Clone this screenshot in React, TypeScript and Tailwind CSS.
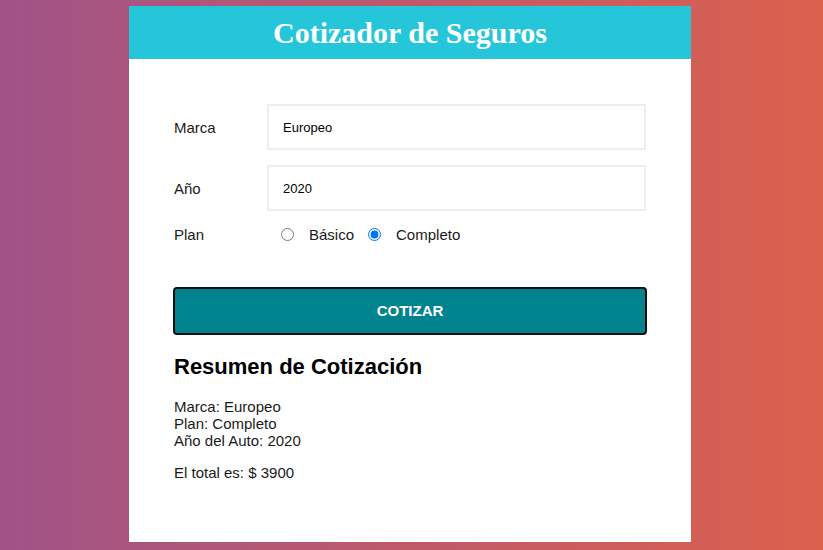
import { useState } from "react";
import type { FormEvent, ReactNode } from "react";

const brands = ["Americano", "Europeo", "Asiatico"];
const years = ["2021", "2020", "2019", "2018", "2017"];

type FieldProps = { id: string; label: string; children: ReactNode };

function Field({ id, label, children }: FieldProps) {
  return (
    <div className="mb-[15px] flex items-center">
      <label htmlFor={id} className="w-[93px] shrink-0">
        {label}
      </label>
      {children}
    </div>
  );
}

const selectClass =
  "min-w-0 flex-1 appearance-none border-2 border-[#eeeeee] bg-white px-[14px] pt-[13px] pb-[11px] text-[13px] leading-[18px] text-black";

export default function App() {
  const [brand, setBrand] = useState("Europeo");
  const [year, setYear] = useState("2020");
  const [plan, setPlan] = useState("Completo");

  const handleSubmit = (event: FormEvent) => event.preventDefault();

  return (
    <div className="min-h-screen bg-linear-to-r from-[#a05288] via-[#bf5a69] to-[#dc604c] pt-[6px] pr-2 pb-2 pl-[5px] font-['Liberation_Sans',Arial,sans-serif] text-[15px] leading-[17px] text-[#1a1a1a]">
      <div className="mx-auto w-full max-w-[562px]">
        <header className="bg-[#26c6da] py-[9px] text-center text-white">
          <h1 className="font-['Liberation_Serif','Times_New_Roman',serif] text-[30px] leading-[35px] font-bold">
            Cotizador de Seguros
          </h1>
        </header>
        <main className="bg-white px-[45px] pt-[45px] pb-[61px]">
          <form onSubmit={handleSubmit}>
            <Field id="marca" label="Marca">
              <select
                id="marca"
                value={brand}
                onChange={(event) => setBrand(event.target.value)}
                className={selectClass}
              >
                {brands.map((name) => (
                  <option key={name}>{name}</option>
                ))}
              </select>
            </Field>
            <Field id="anio" label="Año">
              <select
                id="anio"
                value={year}
                onChange={(event) => setYear(event.target.value)}
                className={selectClass}
              >
                {years.map((name) => (
                  <option key={name}>{name}</option>
                ))}
              </select>
            </Field>
            <div role="radiogroup" aria-labelledby="plan" className="flex items-center">
              <span id="plan" className="w-[93px] shrink-0">
                Plan
              </span>
              {["Básico", "Completo"].map((name) => (
                <label key={name} className="flex items-center">
                  <input
                    type="radio"
                    name="plan"
                    value={name}
                    checked={plan === name}
                    onChange={() => setPlan(name)}
                    className="mr-[15px] ml-[14px] size-[13px]"
                  />
                  {name}
                </label>
              ))}
            </div>
            <button
              type="submit"
              className="mt-[45px] w-full rounded-[3px] bg-[#00838f] pt-[14px] pb-[15px] font-bold text-white uppercase outline-2 -outline-offset-1 outline-[#101010]"
            >
              Cotizar
            </button>
          </form>
          <section className="mt-5">
            <h2 className="text-[22px] leading-[26px] font-bold text-black">
              Resumen de Cotización
            </h2>
            <ul className="mt-[18px]">
              <li>Marca: {brand}</li>
              <li>Plan: {plan}</li>
              <li>Año del Auto: {year}</li>
            </ul>
            <p className="mt-[15px]">El total es: $ 3900</p>
          </section>
        </main>
      </div>
    </div>
  );
}
